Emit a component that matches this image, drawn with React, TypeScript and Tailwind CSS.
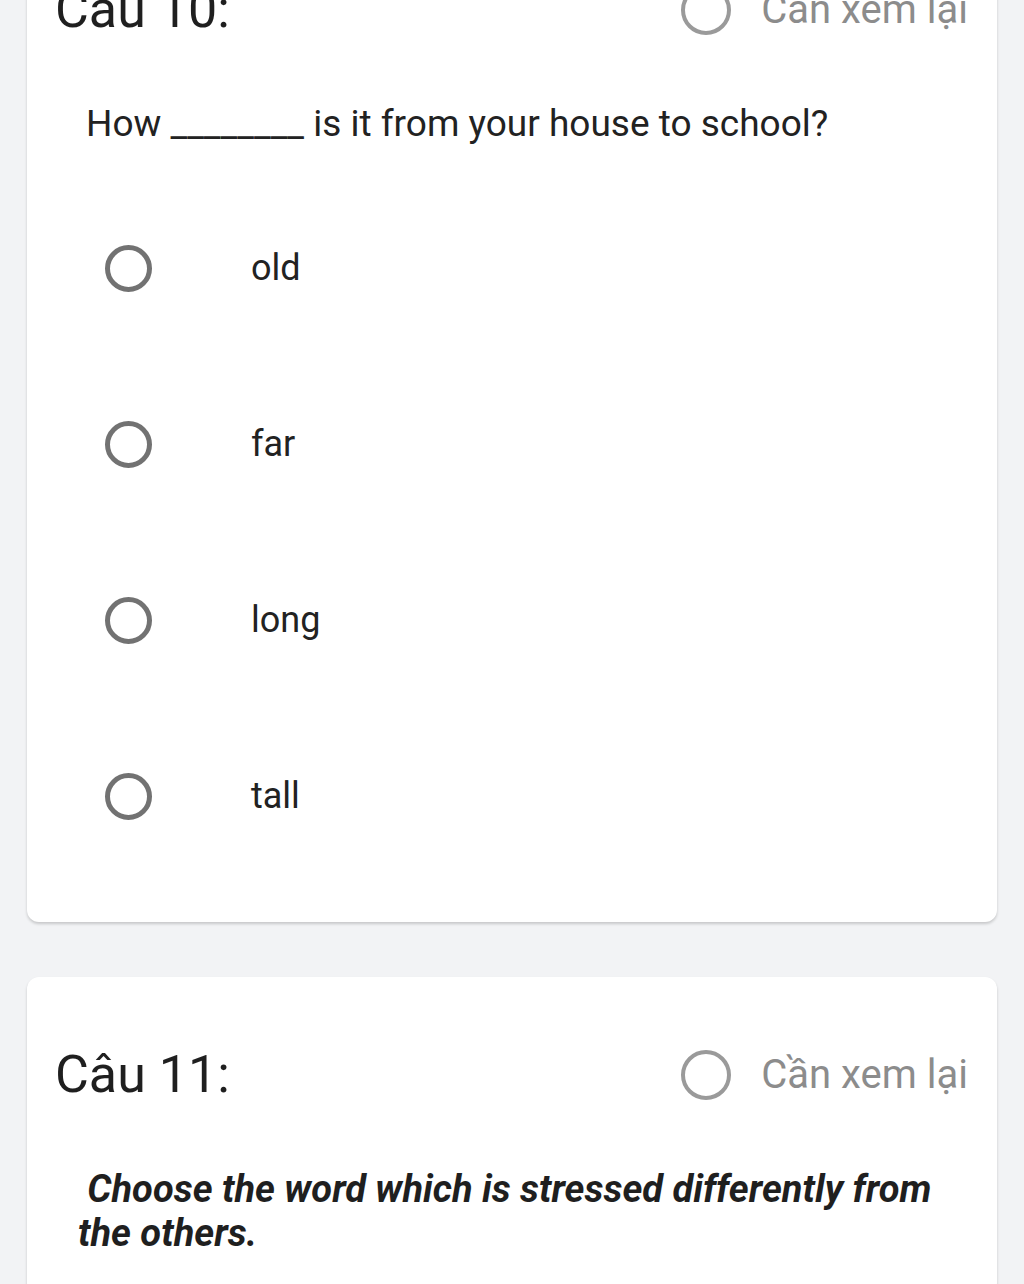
import React from 'react';

const FONT = { fontFamily: 'Roboto, "Noto Sans", sans-serif' } as const;

function Radio({ size = 'md' }: { size?: 'md' | 'lg' }) {
  return size === 'lg' ? (
    <span className="inline-block w-[50px] h-[50px] rounded-full border-[4px] border-[#9a9a9a] shrink-0" />
  ) : (
    <span className="inline-block w-[47px] h-[47px] rounded-full border-[5px] border-[#727272] shrink-0" />
  );
}

function CardHeader({ title }: { title: string }) {
  return (
    <div className="flex items-center justify-between h-[52px] pl-[28px] pr-[29px]">
      <span className="text-[52px] leading-none text-[#1f1f1f]">{title}</span>
      <div className="flex items-center gap-[30px]">
        <Radio size="lg" />
        <span className="text-[40px] leading-none text-[#8c8c8c]">Cần xem lại</span>
      </div>
    </div>
  );
}

const OPTIONS = ['old', 'far', 'long', 'tall'];

export default function App() {
  return (
    <div className="min-h-screen bg-[#f2f3f5] px-[27px] overflow-hidden" style={FONT}>
      <div className="mt-[-88px] bg-white rounded-[12px] shadow-[0_2px_3px_rgba(0,0,0,0.18)] pt-[72px] pb-[38px]">
        <CardHeader title="Câu 10:" />
        <p className="mt-[66px] pl-[59px] text-[37px] leading-[44px] text-[#222]">
          How ________ is it from your house to school?
        </p>
        <div className="mt-[34px]">
          {OPTIONS.map((o) => (
            <div key={o} className="h-[176px] flex items-center pl-[78px]">
              <Radio />
              <span className="ml-[99px] text-[36px] leading-none text-[#222]">{o}</span>
            </div>
          ))}
        </div>
      </div>

      <div className="mt-[55px] bg-white rounded-[12px] shadow-[0_2px_3px_rgba(0,0,0,0.18)] pt-[72px] pb-[40px]">
        <CardHeader title="Câu 11:" />
        <p className="mt-[66px] pl-[51px] pr-[30px] text-[38px] leading-[44px] font-bold italic text-[#1f1f1f]">
          &nbsp;Choose the word which is stressed differently from the others.
        </p>
      </div>
    </div>
  );
}
